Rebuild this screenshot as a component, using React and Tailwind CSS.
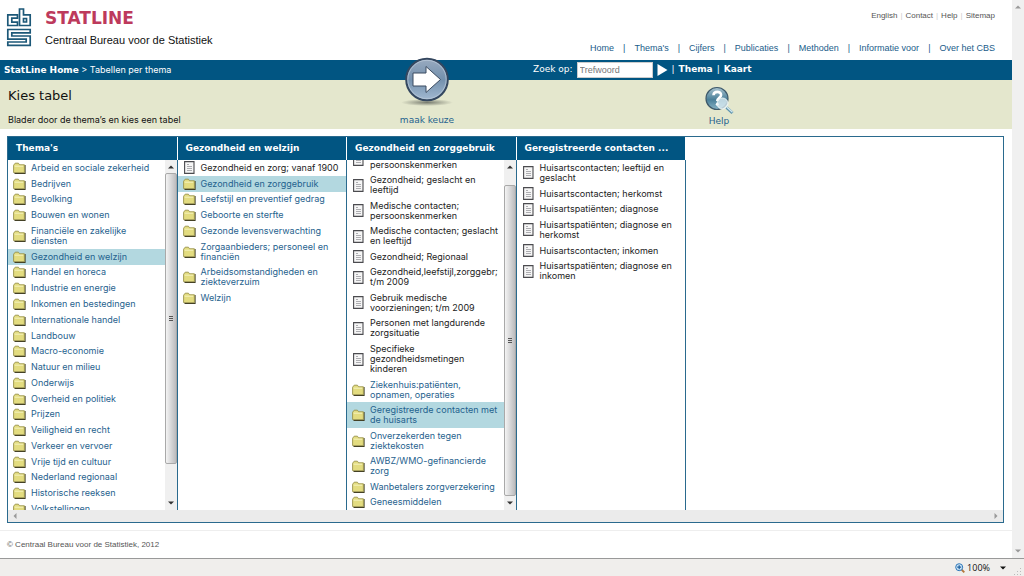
const mainLinks = ["Home", "Thema's", 'Cijfers', 'Publicaties', 'Methoden', 'Informatie voor', 'Over het CBS']
const metaLinks = ['English', 'Contact', 'Help', 'Sitemap']

// doc: true is a table, everything else is a folder
const themes = [
  { label: 'Arbeid en sociale zekerheid' },
  { label: 'Bedrijven' },
  { label: 'Bevolking' },
  { label: 'Bouwen en wonen' },
  { label: 'Financiële en zakelijke\ndiensten' },
  { label: 'Gezondheid en welzijn', active: true },
  { label: 'Handel en horeca' },
  { label: 'Industrie en energie' },
  { label: 'Inkomen en bestedingen' },
  { label: 'Internationale handel' },
  { label: 'Landbouw' },
  { label: 'Macro-economie' },
  { label: 'Natuur en milieu' },
  { label: 'Onderwijs' },
  { label: 'Overheid en politiek' },
  { label: 'Prijzen' },
  { label: 'Veiligheid en recht' },
  { label: 'Verkeer en vervoer' },
  { label: 'Vrije tijd en cultuur' },
  { label: 'Nederland regionaal' },
  { label: 'Historische reeksen' },
  { label: 'Volkstellingen' },
]

const welfare = [
  { label: 'Gezondheid en zorg; vanaf 1900', doc: true },
  { label: 'Gezondheid en zorggebruik', active: true },
  { label: 'Leefstijl en preventief gedrag' },
  { label: 'Geboorte en sterfte' },
  { label: 'Gezonde levensverwachting' },
  { label: 'Zorgaanbieders; personeel en\nfinanciën' },
  { label: 'Arbeidsomstandigheden en\nziekteverzuim' },
  { label: 'Welzijn' },
]

const careUse = [
  { label: '\npersoonskenmerken', doc: true },
  { label: 'Gezondheid; geslacht en\nleeftijd', doc: true },
  { label: 'Medische contacten;\npersoonskenmerken', doc: true },
  { label: 'Medische contacten; geslacht\nen leeftijd', doc: true },
  { label: 'Gezondheid; Regionaal', doc: true },
  { label: 'Gezondheid,leefstijl,zorggebr;\nt/m 2009', doc: true },
  { label: 'Gebruik medische\nvoorzieningen; t/m 2009', doc: true },
  { label: 'Personen met langdurende\nzorgsituatie', doc: true },
  { label: 'Specifieke\ngezondheidsmetingen\nkinderen', doc: true },
  { label: 'Ziekenhuis:patiënten,\nopnamen, operaties' },
  { label: 'Geregistreerde contacten met\nde huisarts', active: true },
  { label: 'Onverzekerden tegen\nziektekosten' },
  { label: 'AWBZ/WMO-gefinancierde\nzorg' },
  { label: 'Wanbetalers zorgverzekering' },
  { label: 'Geneesmiddelen' },
]

const contacts = [
  { label: 'Huisartscontacten; leeftijd en\ngeslacht', doc: true },
  { label: 'Huisartscontacten; herkomst', doc: true },
  { label: 'Huisartspatiënten; diagnose', doc: true },
  { label: 'Huisartspatiënten; diagnose en\nherkomst', doc: true },
  { label: 'Huisartscontacten; inkomen', doc: true },
  { label: 'Huisartspatiënten; diagnose en\ninkomen', doc: true },
]

function CbsLogo() {
  return (
    <svg width="26" height="40" viewBox="0 0 26 40" fill="none" stroke="#1c5878" strokeWidth="1.700" aria-hidden="true">
      <path d="M11.500 6.800H1.800v10.700h9.700v-3.300H5.800v-4h5.700z" />
      <path d="M13.500 1h4v5.800h6.700v10.700H13.500zM17.500 10.500v3.500h3v-3.500z" />
      <path d="M1.800 21.500h22.400v3.300H5.800v3.200h18.400v9.300H1.800v-3.300h18.400v-2.800H1.800z" />
    </svg>
  )
}

function FolderIcon() {
  return (
    <svg className="-my-1 shrink-0" width="13" height="12" viewBox="0 0 13 12" aria-hidden="true">
      <path d="M1.500 11.500h10.500v-8.500" fill="none" stroke="#3d3b22" strokeWidth="1.200" />
      <path d="M.6 10.600V3.200L2.200 1.200h3.200l1.200 1.600h4.800v7.800z" fill="#e3dc80" stroke="#99924a" strokeWidth=".9" />
      <path d="M1.600 4.200h8.600" stroke="#f5f2bd" />
    </svg>
  )
}

function TableIcon() {
  return (
    <svg className="-my-1 shrink-0" width="13" height="13" viewBox="0 0 13 13" aria-hidden="true">
      <path d="M1.600 .6h9.400v11.800H1.600z" fill="#f6f6f6" stroke="#4b4b4f" strokeWidth="1.100" />
      <path d="M4 3.500h2M4 5.500h5M4 7.500h5M4 9.500h5" stroke="#a5a5a9" strokeWidth=".9" />
    </svg>
  )
}

function ArrowIcon() {
  return (
    <svg width="52" height="50" viewBox="0 0 52 50" aria-hidden="true">
      <defs>
        <linearGradient id="disc" x1="0" y1="0" x2="0" y2="1">
          <stop offset="0" stopColor="#9aabc0" />
          <stop offset=".5" stopColor="#7390ad" />
          <stop offset="1" stopColor="#a3bad2" />
        </linearGradient>
        <radialGradient id="shade">
          <stop offset="0" stopColor="#6c7065" stopOpacity=".9" />
          <stop offset="1" stopColor="#6c7065" stopOpacity="0" />
        </radialGradient>
      </defs>
      <ellipse cx="26" cy="45.500" rx="26" ry="3.500" fill="url(#shade)" />
      <circle cx="26" cy="22.500" r="20.800" fill="url(#disc)" stroke="#34475f" strokeWidth="2" />
      <circle cx="26" cy="22.500" r="19.200" fill="none" stroke="#b9c8d8" strokeWidth=".8" />
      <path d="M12 16h13V9.500l14.500 13L25 35.500V29H12z" fill="#fff" stroke="#3b4b60" strokeWidth="1" />
    </svg>
  )
}

function HelpIcon() {
  return (
    <svg width="30" height="30" viewBox="0 0 30 30" aria-hidden="true">
      <defs>
        <linearGradient id="ball" x1="0" y1="0" x2="0" y2="1">
          <stop offset="0" stopColor="#a9c3cf" />
          <stop offset=".55" stopColor="#4a7f99" />
          <stop offset="1" stopColor="#86b2c4" />
        </linearGradient>
      </defs>
      <circle cx="13" cy="12.500" r="11" fill="url(#ball)" stroke="#3f5a6b" strokeWidth="1.200" />
      <path d="M9.500 9.200c.2-4.400 7.600-4.400 7.600-.2 0 2.800-3.800 2.900-3.800 6" fill="none" stroke="#fff" strokeWidth="2.600" />
      <circle cx="13.300" cy="18.300" r="1.500" fill="#fff" />
      <circle cx="18.500" cy="17.500" r="5.500" fill="#e4f3f8" fillOpacity=".75" stroke="#eef6f6" />
      <path d="M22.500 21.500l6 5.500" stroke="#5e93ad" strokeWidth="3" />
      <path d="M23 21.200l5.500 5" stroke="#d4e8ee" strokeWidth="1.400" />
    </svg>
  )
}

function Triangle({ className, d }) {
  return (
    <svg className={className} width="6" height="6" viewBox="0 0 6 6" fill="currentColor" aria-hidden="true">
      <path d={d} />
    </svg>
  )
}

const UP = 'M0 4.500 3 1.500 6 4.500z'
const DOWN = 'M0 1.500h6L3 4.500z'
const LEFT = 'M4.500 0v6l-3-3z'
const RIGHT = 'M1.500 0v6l3-3z'

function ScrollBar({ thumb }) {
  return (
    <div className="flex w-3 shrink-0 flex-col items-center bg-[#f0f0f0] py-1 text-[#333]">
      <Triangle d={UP} />
      <div className={`flex w-full flex-col items-center justify-center gap-px rounded-xs border border-[#a9a9a9] bg-linear-to-r from-[#f4f4f4] to-[#bcbcbe] ${thumb}`}>
        <span className="h-px w-1 bg-[#555]" />
        <span className="h-px w-1 bg-[#555]" />
        <span className="h-px w-1 bg-[#555]" />
      </div>
      <Triangle className="mt-auto" d={DOWN} />
    </div>
  )
}

function Column({ title, items, listClass, atEnd, thumb }) {
  return (
    <section className="flex min-w-0 flex-1 flex-col border-r border-[#2a6a8e]">
      <h2 className="-mr-px flex h-[23px] items-center border-r border-white bg-[#015582] pl-2 font-['DejaVu_Sans',sans-serif] font-bold text-white">{title}</h2>
      <div className="flex min-h-0 flex-1">
        <div className={`flex min-w-0 flex-1 flex-col overflow-hidden ${atEnd ? 'justify-end' : ''}`}>
          <ul className={`flex shrink-0 flex-col ${listClass}`}>
            {items.map((item) => (
              <li key={item.label} className={`flex grow ${item.active ? 'bg-[#b3d8e0]' : ''}`}>
                <a href="#" className={`flex flex-1 items-center gap-[5px] py-0.5 pl-[5px] leading-[10px] whitespace-pre ${item.doc ? 'text-[#222]' : 'text-[#1f628e]'}`}>
                  {item.doc ? <TableIcon /> : <FolderIcon />}
                  {item.label}
                </a>
              </li>
            ))}
          </ul>
        </div>
        {thumb && <ScrollBar thumb={thumb} />}
      </div>
    </section>
  )
}

export default function App() {
  return (
    <div className="flex h-screen flex-col overflow-hidden bg-white font-['Inter',sans-serif] text-[9px] text-[#111]">
      <div className="flex min-h-0 flex-1">
        <div className="flex min-w-0 flex-1 flex-col">
          <header className="flex h-[60px] justify-between pt-2 pr-[17px] pl-1.5 font-['Liberation_Sans',sans-serif]">
            <div className="flex gap-[13px]">
              <CbsLogo />
              <div>
                <h1 className="font-['DejaVu_Sans',sans-serif] text-[17px] leading-5 font-bold text-[#bd3a5c]">STATLINE</h1>
                <p className="mt-1 text-[11px] leading-4">Centraal Bureau voor de Statistiek</p>
              </div>
            </div>
            <div className="flex flex-col items-end justify-between pb-1.5">
              <nav aria-label="Service" className="flex text-[8px] leading-4 text-[#555]">
                {metaLinks.map((link, i) => (
                  <span key={link} className="flex">
                    {i > 0 && <span className="mx-[3px] text-[#ccc]">|</span>}
                    <a href="#">{link}</a>
                  </span>
                ))}
              </nav>
              <nav aria-label="Hoofdmenu" className="flex leading-3 text-[#1a5c8a]">
                {mainLinks.map((link, i) => (
                  <span key={link} className="flex">
                    {i > 0 && <span className="mx-[9px]">|</span>}
                    <a href="#">{link}</a>
                  </span>
                ))}
              </nav>
            </div>
          </header>

          <div className="flex h-5 items-center bg-[#015582] text-white">
            <p className="w-[533px] pl-1">
              <a href="#" className="font-['DejaVu_Sans',sans-serif] font-bold">StatLine Home</a> &gt; Tabellen per thema
            </p>
            <form className="flex items-center gap-1 font-['DejaVu_Sans',sans-serif]">
              <label htmlFor="zoek">Zoek op:</label>
              <input id="zoek" type="text" placeholder="Trefwoord" className="h-4 w-[76px] border border-[#ccc] bg-white px-0.5 font-['Liberation_Sans',sans-serif] placeholder:text-[#777]" />
              <button type="button" aria-label="Zoeken">
                <svg width="11" height="12" viewBox="0 0 11 12" fill="#fff" aria-hidden="true">
                  <path d="M.5 0 10.500 6 .5 12z" />
                </svg>
              </button>
              <span>|</span>
              <a href="#" className="font-bold">Thema</a>
              <span>|</span>
              <a href="#" className="font-bold">Kaart</a>
            </form>
          </div>

          <div className="flex h-[49px] bg-[#e4e7cd]">
            <div className="w-[392px] pt-2 pl-2">
              <h2 className="font-['DejaVu_Sans',sans-serif] text-[13px] leading-4">Kies tabel</h2>
              <p className="mt-2.5 leading-3">Blader door de thema’s en kies een tabel</p>
            </div>
            <button type="button" className="relative -mt-[23px] flex w-[70px] flex-col items-center justify-between pb-[3px] font-['DejaVu_Sans',sans-serif] leading-3 text-[#1f628e]">
              <ArrowIcon />
              maak keuze
            </button>
            <a href="#" className="ml-[222px] flex w-[70px] flex-col items-center justify-between pt-1.5 pb-[3px] font-['DejaVu_Sans',sans-serif] leading-[10px] text-[#1f628e]">
              <HelpIcon />
              Help
            </a>
          </div>

          <main className="mt-[7px] mr-2 ml-[7px] flex h-[387px] flex-col border border-[#2a6a8e]">
            <div className="flex min-h-0 w-[678px] flex-1">
              <Column title="Thema's" items={themes} listClass="h-[357px]" thumb="mt-[3px] h-[291px]" />
              <Column title="Gezondheid en welzijn" items={welfare} listClass="h-[146px]" />
              <Column title="Gezondheid en zorggebruik" items={careUse} listClass="h-[363px]" atEnd thumb="mt-[15px] h-[311px]" />
              <Column title="Geregistreerde contacten ..." items={contacts} listClass="h-[124px]" />
            </div>
            <div className="flex h-3 items-center justify-between bg-[#ebebeb] px-1 text-[#999]">
              <Triangle d={LEFT} />
              <Triangle d={RIGHT} />
            </div>
          </main>

          <footer className="mt-[7px] border-t border-[#eee] px-[7px] pt-2 font-['Liberation_Sans',sans-serif] text-[8px] leading-3 text-[#555]">
            © Centraal Bureau voor de Statistiek, 2012
          </footer>
        </div>

        <div className="flex w-3 flex-col items-center justify-between bg-[#f0f0f0] py-1 text-[#999]">
          <Triangle d={UP} />
          <Triangle d={DOWN} />
        </div>
      </div>

      <div className="flex h-[18px] items-center justify-end border-t border-[#999] bg-[#f0eeec] pr-0.5 font-['Open_Sans',sans-serif]">
        <svg width="10" height="10" viewBox="0 0 10 10" aria-hidden="true">
          <path d="M6.500 6.500 9.300 9.300" stroke="#b5763a" strokeWidth="1.800" />
          <circle cx="4.200" cy="4.200" r="3.500" fill="#cfe6f7" stroke="#2d76b8" />
          <path d="M4.200 2.200v4M2.200 4.200h4" stroke="#1c5f9f" strokeWidth="1.200" />
        </svg>
        <span className="ml-0.5">100%</span>
        <Triangle className="ml-[10px]" d={DOWN} />
        <svg className="ml-2 self-end" width="8" height="8" viewBox="0 0 8 8" fill="#bbb" aria-hidden="true">
          <path d="M6 0h1v1H6zM6 3h1v1H6zM6 6h1v1H6zM3 3h1v1H3zM3 6h1v1H3zM0 6h1v1H0z" />
        </svg>
      </div>
    </div>
  )
}
